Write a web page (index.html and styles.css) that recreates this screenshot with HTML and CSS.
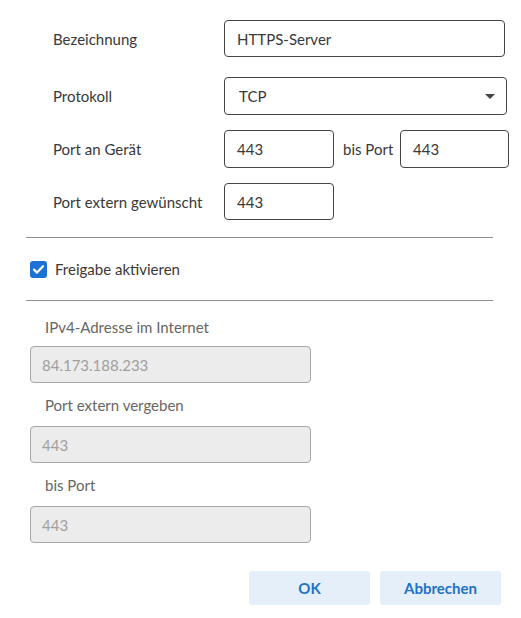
FILE: index.html
```html
<!DOCTYPE html>
<html lang="de">
<head>
<meta charset="utf-8">
<link rel="stylesheet" href="styles.css">
</head>
<body>
<div class="dialog">
  <div class="top">
    <div class="row r1">
      <div class="label">Bezeichnung</div>
      <div class="field wide">HTTPS-Server</div>
    </div>
    <div class="row r2">
      <div class="label">Protokoll</div>
      <div class="field wide select">TCP
        <svg class="arrow" width="10" height="5" viewBox="0 0 10 5"><path d="M0 0h10L5 5z" fill="#444"/></svg>
      </div>
    </div>
    <div class="row r3">
      <div class="label">Port an Gerät</div>
      <div class="field small">443</div>
      <div class="bis">bis Port</div>
      <div class="field small">443</div>
    </div>
    <div class="row r4">
      <div class="label">Port extern gewünscht</div>
      <div class="field small">443</div>
    </div>
  </div>
  <hr class="divider d1">
  <div class="check-row">
    <span class="checkbox"><svg width="17" height="17" viewBox="0 0 17 17"><path d="M4 8.6l3 3 6-6.4" fill="none" stroke="#fff" stroke-width="2.2" stroke-linecap="round" stroke-linejoin="round"/></svg></span>
    <span class="check-label">Freigabe aktivieren</span>
  </div>
  <hr class="divider d2">
  <div class="bottom">
    <div class="dlabel l1">IPv4-Adresse im Internet</div>
    <div class="dfield">84.173.188.233</div>
    <div class="dlabel">Port extern vergeben</div>
    <div class="dfield">443</div>
    <div class="dlabel">bis Port</div>
    <div class="dfield">443</div>
  </div>
  <div class="buttons">
    <button class="btn">OK</button>
    <button class="btn">Abbrechen</button>
  </div>
</div>
</body>
</html>
```
FILE: styles.css
```css
* { box-sizing: border-box; }
html, body { margin: 0; padding: 0; background: #fff; }
body {
  font-family: Lato, "Liberation Sans", sans-serif;
  font-size: 15px;
  color: #383838;
}
.dialog { width: 521px; height: 618px; position: relative; }
.top { display: flex; flex-direction: column; padding-top: 20px; }
.row { display: flex; align-items: center; }
.r2 { margin-top: 20px; }
.r3, .r4 { margin-top: 15px; }
.label { width: 224px; padding-left: 53px; color: #383838; }
.field {
  height: 37px;
  border: 1px solid #444;
  border-radius: 4px;
  display: flex;
  align-items: center;
  padding-left: 12px;
  color: #383838;
}
.wide { width: 281px; }
.select { width: 283px; height: 38px; position: relative; padding-left: 14px; }
.r3 .field { height: 38px; }
.arrow { position: absolute; right: 11px; top: 16px; }
.small { width: 110px; }
.r3 .small:last-child { width: 109px; }
.bis { width: 66px; padding-left: 9px; color: #383838; }
.divider {
  margin: 0 0 0 26px;
  width: 467px;
  border: 0;
  border-top: 1px solid #8f8f8f;
  height: 0;
}
.d1 { margin-top: 17px; }
.check-row { display: flex; align-items: center; height: 62px; padding-left: 30px; }
.checkbox {
  width: 17px; height: 17px;
  background: #1a73d4;
  border-radius: 3px;
  display: inline-flex;
}
.check-label { margin-left: 8px; color: #383838; }
.bottom { display: flex; flex-direction: column; padding-left: 30px; }
.dlabel { color: #666; padding-left: 15px; height: 43px; display: flex; align-items: center; }
.l1 { height: 45px; padding-top: 7px; }
.dfield {
  width: 281px;
  height: 37px;
  background: #ebeceb;
  border: 1px solid #a8a8a8;
  border-radius: 4px;
  color: #a0a0a0;
  display: flex; align-items: center;
  padding-left: 11px;
}
.buttons { display: flex; justify-content: flex-end; gap: 10px; padding-right: 20px; margin-top: 28px; }
.btn {
  width: 121px; height: 34px;
  background: #e5eff9;
  border: 0; border-radius: 3px;
  color: #1d72c8;
  font-family: Lato, "Liberation Sans", sans-serif;
  font-weight: bold;
  font-size: 15px;
}
```
